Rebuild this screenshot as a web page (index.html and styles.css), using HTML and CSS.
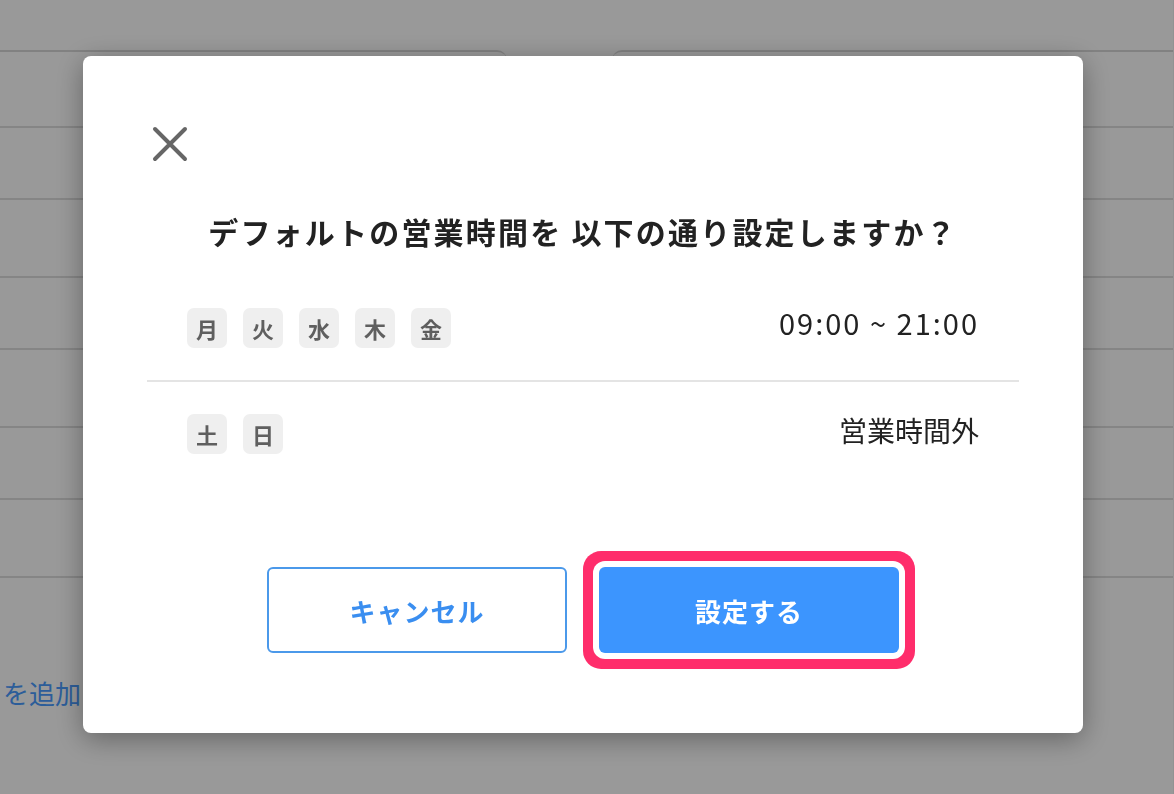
FILE: index.html
```html
<!DOCTYPE html>
<html lang="ja">

<head>
  <meta charset="UTF-8" />
  <meta name="viewport" content="width=device-width, initial-scale=1.0" />
  <title>営業時間設定</title>
  <link rel="stylesheet" href="styles.css">
</head>

<body>

  <!-- 背景のページ -->
  <div class="pagina">
    <div class="tarjetas">
      <div class="tarjeta">
        <div class="fila"></div>
        <div class="fila"></div>
        <div class="fila"></div>
        <div class="fila"></div>
        <div class="fila"></div>
        <div class="fila"></div>
        <div class="fila"></div>
      </div>
      <div class="tarjeta">
        <div class="fila"></div>
        <div class="fila"></div>
        <div class="fila"></div>
        <div class="fila"></div>
        <div class="fila"></div>
        <div class="fila"></div>
        <div class="fila"></div>
      </div>
    </div>
    <a class="agregar">を追加する</a>
  </div>

  <!-- Modal -->
  <div class="overlay">
    <div class="modal">
      <button class="cerrar" aria-label="閉じる">
        <svg width="36" height="36" viewBox="0 0 36 36">
          <path d="M3 3 L33 33 M33 3 L3 33" stroke="#666" stroke-width="4" stroke-linecap="round" fill="none" />
        </svg>
      </button>

      <h2 class="titulo">デフォルトの営業時間を 以下の通り設定しますか？</h2>

      <div class="horario">
        <div class="horario-fila">
          <div class="dias">
            <span class="dia">月</span>
            <span class="dia">火</span>
            <span class="dia">水</span>
            <span class="dia">木</span>
            <span class="dia">金</span>
          </div>
          <span class="hora">09:00 ~ 21:00</span>
        </div>
        <div class="horario-fila">
          <div class="dias">
            <span class="dia">土</span>
            <span class="dia">日</span>
          </div>
          <span class="hora">営業時間外</span>
        </div>
      </div>

      <div class="botones">
        <button class="boton boton-cancelar">キャンセル</button>
        <button class="boton boton-ok">設定する</button>
      </div>
    </div>
  </div>

</body>

</html>
```

FILE: styles.css
```css
:root {
  --azul: #3c95fe;
  --azul-borde: #4b99ea;
  --texto: #222;
  --gris-chip: #efefef;
  --rosa: #ff2d6b;
}

* {
  box-sizing: border-box;
}

body {
  margin: 0;
  width: 1174px;
  height: 794px;
  overflow: hidden;
  background: #fff;
  font-family: "Noto Sans CJK JP", "Noto Sans", sans-serif;
  color: var(--texto);
}

/* Página de fondo */
.pagina {
  height: 100%;
  padding-top: 50px;
  border-right: 1px solid #f4f4f4;
  overflow: hidden;
}

.tarjetas {
  display: flex;
  gap: 105px;
  margin: 0 -40px;
}

.tarjeta {
  border-top: 2px solid #d8d8d8;
  border-radius: 10px 10px 0 0;
}

.tarjeta:first-child {
  width: 547px;
}

.tarjeta:last-child {
  flex: 1;
}

.fila {
  height: 78px;
  border-bottom: 2px solid #dedede;
}

.fila:nth-child(even) {
  height: 72px;
}

.fila:first-child {
  height: 76px;
}

.agregar {
  display: block;
  margin-top: 96px;
  padding-left: 3px;
  font-size: 26px;
  color: #4a9cff;
}

/* Overlay y modal */
.overlay {
  position: fixed;
  inset: 0;
  background: rgba(0, 0, 0, 0.4);
  padding: 56px 0 0 83px;
}

.modal {
  width: 1000px;
  height: 677px;
  background: #fff;
  border-radius: 8px;
  padding: 70px 64px 80px;
  box-shadow: 0 6px 28px rgba(0, 0, 0, 0.35);
}

.cerrar {
  display: block;
  margin-left: 5px;
  padding: 0;
  border: none;
  background: none;
  width: 36px;
  height: 36px;
  cursor: pointer;
}

.cerrar svg {
  display: block;
}

.titulo {
  margin: 48px 0 24px;
  text-align: center;
  font-size: 30px;
  line-height: 42px;
  font-weight: 700;
  letter-spacing: 2.2px;
  color: #222;
}

.horario-fila {
  display: flex;
  justify-content: space-between;
  align-items: flex-start;
  padding: 32px 40px;
}

.horario-fila:first-child {
  border-bottom: 2px solid #e4e4e4;
}

.dias {
  display: flex;
  gap: 16px;
}

.dia {
  width: 40px;
  height: 40px;
  border-radius: 7px;
  background: var(--gris-chip);
  color: #5f5f5f;
  font-size: 22px;
  font-weight: 700;
  display: flex;
  justify-content: center;
  align-items: center;
}

.hora {
  font-size: 28px;
  line-height: 32px;
  color: #222;
}

.horario-fila:first-child .hora {
  font-size: 29px;
  line-height: 28px;
  letter-spacing: 2px;
}

.botones {
  display: flex;
  justify-content: center;
  gap: 32px;
  margin-top: 81px;
}

.boton {
  width: 300px;
  height: 86px;
  border-radius: 6px;
  font-family: inherit;
  font-size: 26px;
  font-weight: 700;
  letter-spacing: 1px;
  cursor: pointer;
}

.boton-cancelar {
  background: #fff;
  border: 2px solid var(--azul-borde);
  color: #3a8ef0;
}

.boton-ok {
  background: var(--azul);
  border: none;
  color: #fff;
  /* resaltado rosa */
  box-shadow: 0 0 0 6px #fff, 0 0 0 16px var(--rosa);
}
```
